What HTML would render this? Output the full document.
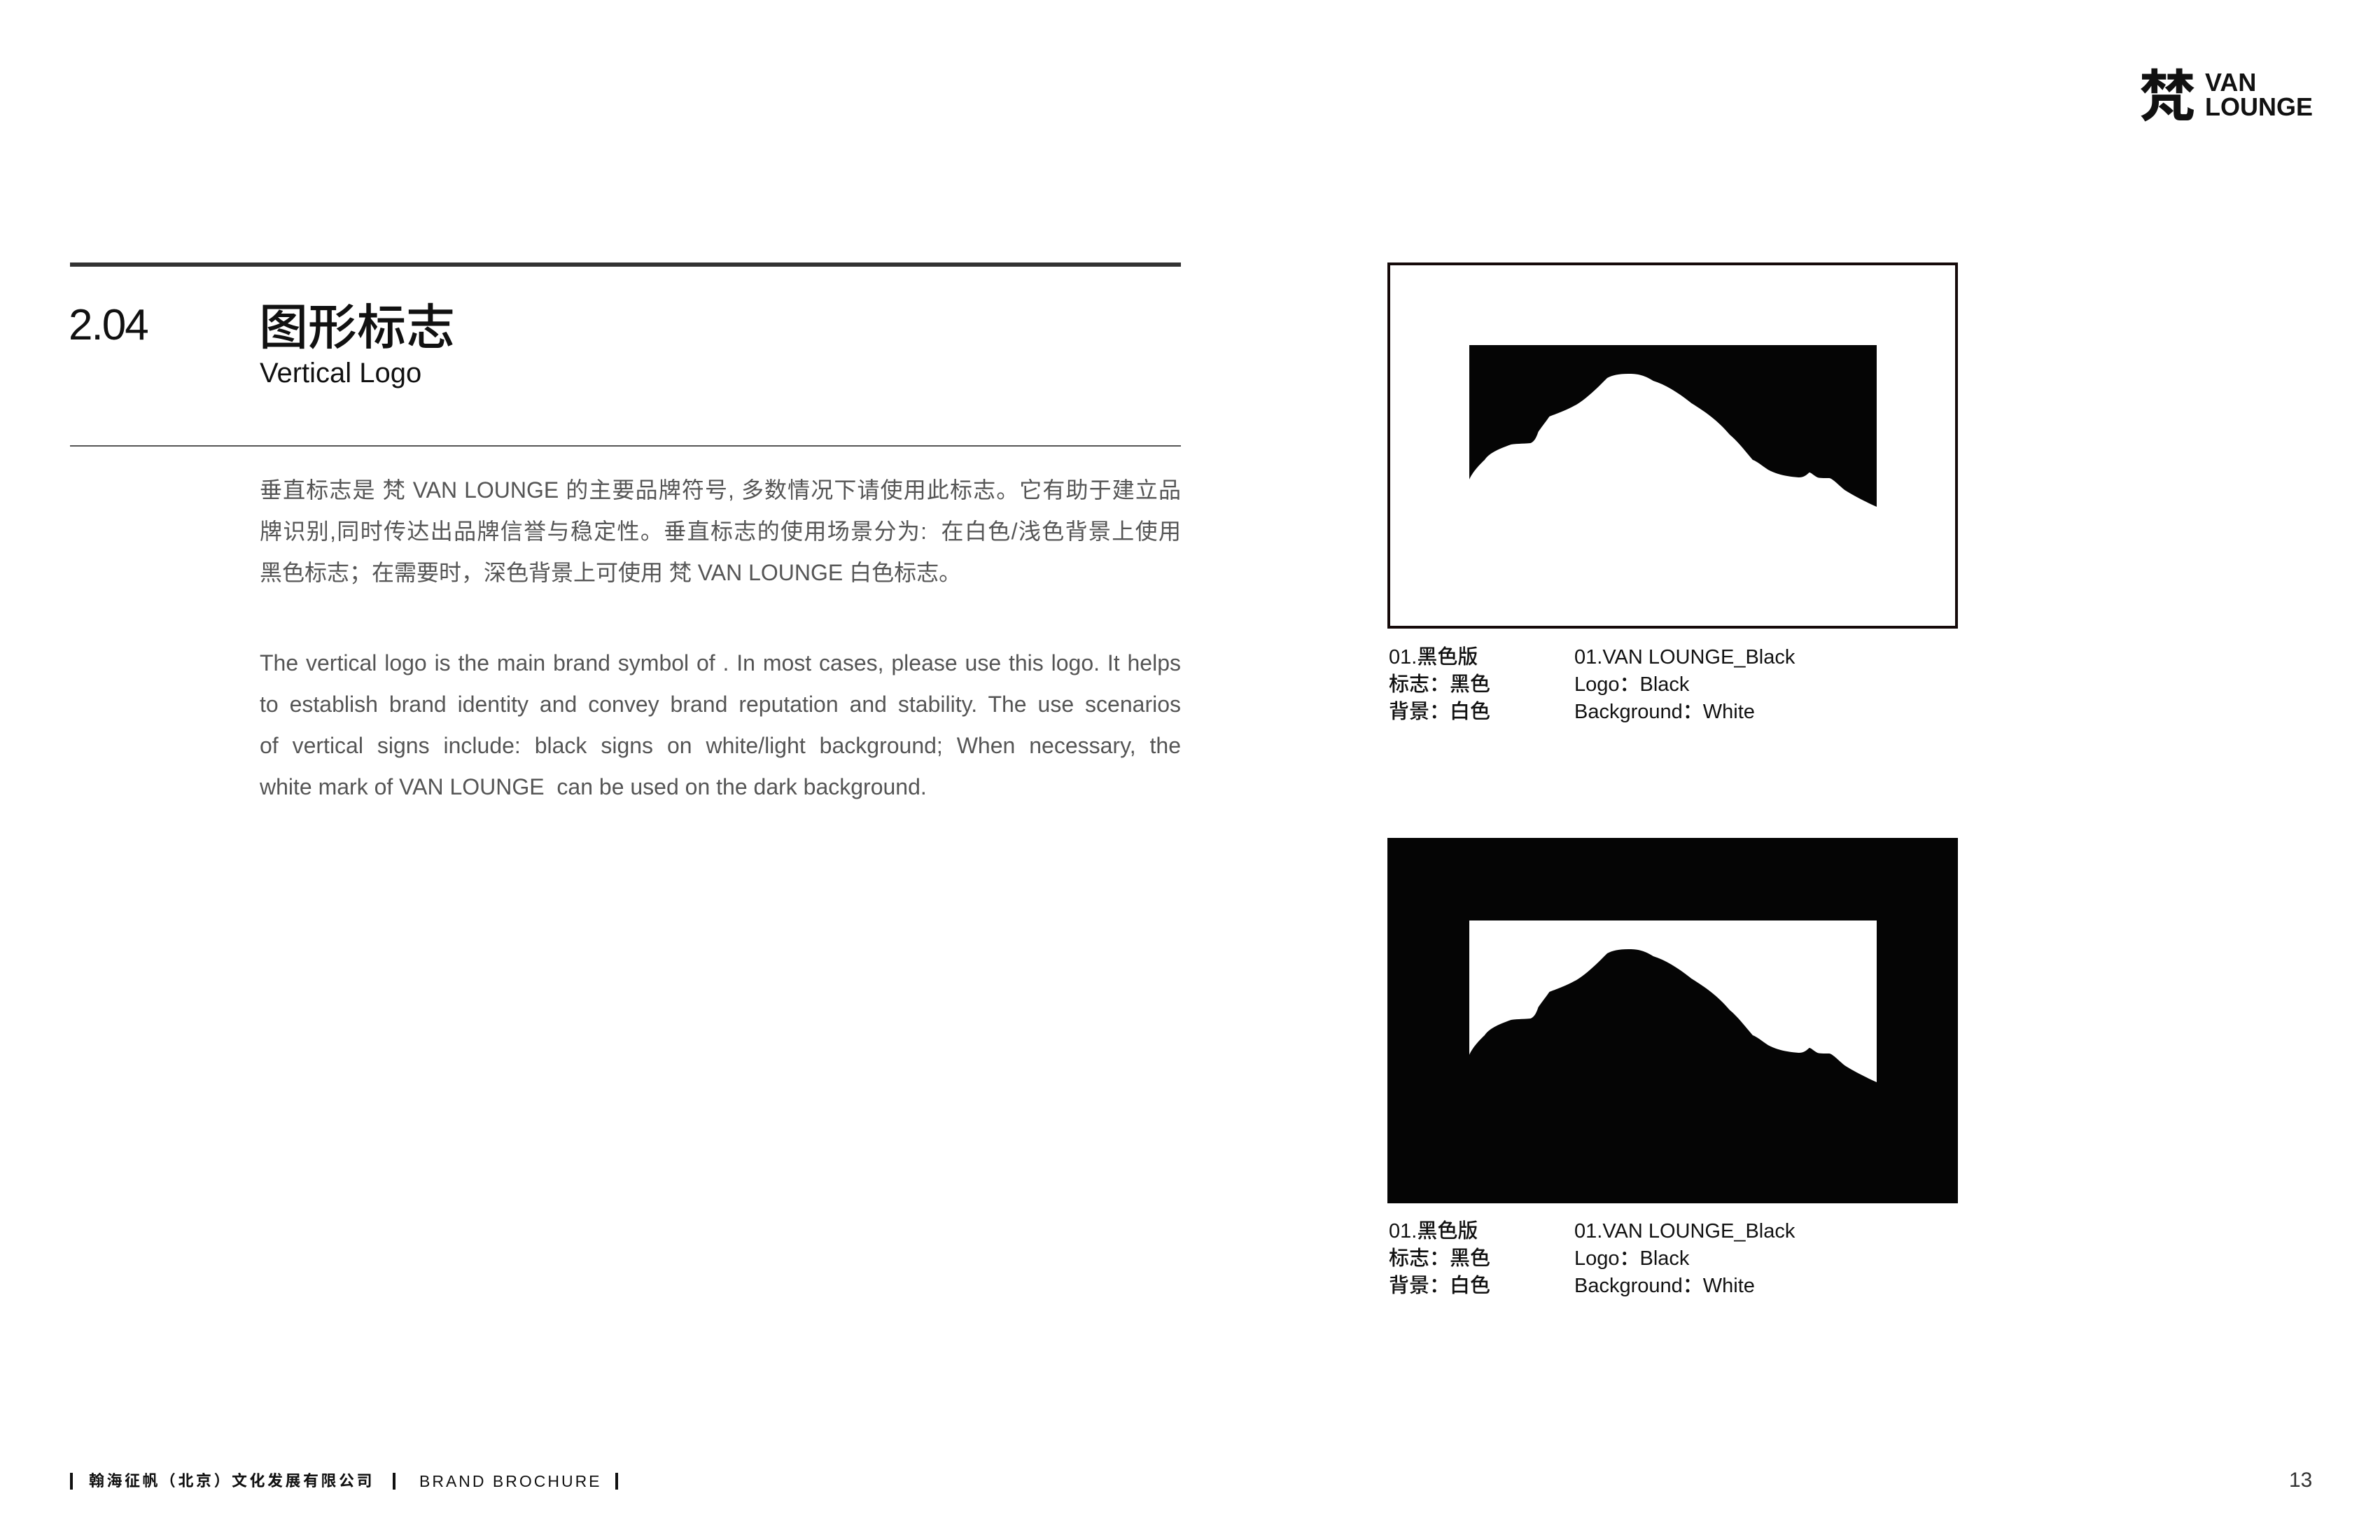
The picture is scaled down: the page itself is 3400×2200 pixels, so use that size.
<!DOCTYPE html>
<html><head><meta charset="utf-8"><style>
*{margin:0;padding:0;box-sizing:border-box}
body{width:3400px;height:2200px;background:#fff;position:relative;overflow:hidden;font-family:"Liberation Sans","Noto Sans CJK SC",sans-serif;color:#111}
.a{position:absolute;white-space:nowrap}
.p{position:absolute;left:371px;width:1316px;font-size:32px;color:#555;line-height:59px}
.p div{text-align:justify;text-align-last:justify;white-space:nowrap}
.p div.l{text-align-last:left}
.lbl{font-size:29px;line-height:39px;color:#111;font-weight:500}
</style></head><body>
<!-- logo -->
<div class="a" style="left:3056px;top:90px;font-size:80px;font-weight:bold;line-height:84px;font-family:'Noto Sans CJK SC',sans-serif">梵</div>
<div class="a" style="left:3150px;top:100px;font-size:36px;font-weight:bold;line-height:35px">VAN<br>LOUNGE</div>

<div class="a" style="left:100px;top:375px;width:1587px;height:6px;background:#333"></div>
<div class="a" style="left:98px;top:430px;font-size:62px;line-height:70px;letter-spacing:-2px">2.04</div>
<div class="a" style="left:370px;top:418px;font-size:70px;line-height:90px;font-weight:500;font-family:'Noto Sans CJK SC',sans-serif">图形标志</div>
<div class="a" style="left:371px;top:508px;font-size:40px;line-height:50px">Vertical Logo</div>
<div class="a" style="left:100px;top:636px;width:1587px;height:2px;background:#555"></div>

<div class="p" style="top:671px">
<div>垂直标志是 梵 VAN LOUNGE 的主要品牌符号, 多数情况下请使用此标志。它有助于建立品</div>
<div>牌识别,同时传达出品牌信誉与稳定性。垂直标志的使用场景分为:&nbsp; 在白色/浅色背景上使用</div>
<div class="l">黑色标志；在需要时，深色背景上可使用 梵 VAN LOUNGE 白色标志。</div>
</div>
<div class="p" style="top:918px">
<div>The vertical logo is the main brand symbol of . In most cases, please use this logo. It helps</div>
<div>to establish brand identity and convey brand reputation and stability. The use scenarios</div>
<div>of vertical signs include: black signs on white/light background; When necessary, the</div>
<div class="l">white mark of VAN LOUNGE&nbsp; can be used on the dark background.</div>
</div>

<!-- box 1 -->
<div class="a" style="left:1982px;top:375px;width:815px;height:523px;border:4px solid #150a0a"></div>
<svg class="a" style="left:2099px;top:493px" width="582" height="231" viewBox="0 0 585 231" preserveAspectRatio="none">
<path fill="#050505" d="M0,0H585V231C565,222 550,214 539,207C528,198 522,191 517,190C508,190 503,190 500,189C494,186 491,182 488,182C484,186 480,189 473,189C455,188 440,184 429,178C420,172 413,166 407,164C395,150 385,137 374,128C357,108 340,96 319,83C300,68 283,57 264,51C250,42 240,41 228,41C215,41 205,43 198,47C185,60 170,75 154,85C135,95 125,98 115,102C108,112 103,118 99,124C96,133 93,138 88,140C75,141 65,141 60,142C40,149 28,155 22,164C10,175 3,185 0,192Z"/>
</svg>
<div class="a lbl" style="left:1984px;top:920px">01.黑色版<br>标志：黑色<br>背景：白色</div>
<div class="a lbl" style="left:2249px;top:920px">01.VAN LOUNGE_Black<br>Logo：Black<br>Background：White</div>

<!-- box 2 -->
<div class="a" style="left:1982px;top:1197px;width:815px;height:522px;background:#050505"></div>
<svg class="a" style="left:2099px;top:1315px" width="582" height="231" viewBox="0 0 585 231" preserveAspectRatio="none">
<path fill="#fff" d="M0,0H585V231C565,222 550,214 539,207C528,198 522,191 517,190C508,190 503,190 500,189C494,186 491,182 488,182C484,186 480,189 473,189C455,188 440,184 429,178C420,172 413,166 407,164C395,150 385,137 374,128C357,108 340,96 319,83C300,68 283,57 264,51C250,42 240,41 228,41C215,41 205,43 198,47C185,60 170,75 154,85C135,95 125,98 115,102C108,112 103,118 99,124C96,133 93,138 88,140C75,141 65,141 60,142C40,149 28,155 22,164C10,175 3,185 0,192Z"/>
</svg>
<div class="a lbl" style="left:1984px;top:1740px">01.黑色版<br>标志：黑色<br>背景：白色</div>
<div class="a lbl" style="left:2249px;top:1740px">01.VAN LOUNGE_Black<br>Logo：Black<br>Background：White</div>

<!-- footer -->
<div class="a" style="left:100px;top:2104px;width:4px;height:24px;background:#111"></div>
<div class="a" style="left:127px;top:2100px;font-size:22px;line-height:32px;font-weight:bold;letter-spacing:3.5px">翰海征帆（北京）文化发展有限公司</div>
<div class="a" style="left:561px;top:2104px;width:4px;height:24px;background:#111"></div>
<div class="a" style="left:599px;top:2100px;font-size:23px;line-height:32px;letter-spacing:3px">BRAND BROCHURE</div>
<div class="a" style="left:879px;top:2104px;width:4px;height:24px;background:#111"></div>
<div class="a" style="left:3270px;top:2097px;font-size:30px;line-height:36px;color:#333">13</div>
</body></html>
